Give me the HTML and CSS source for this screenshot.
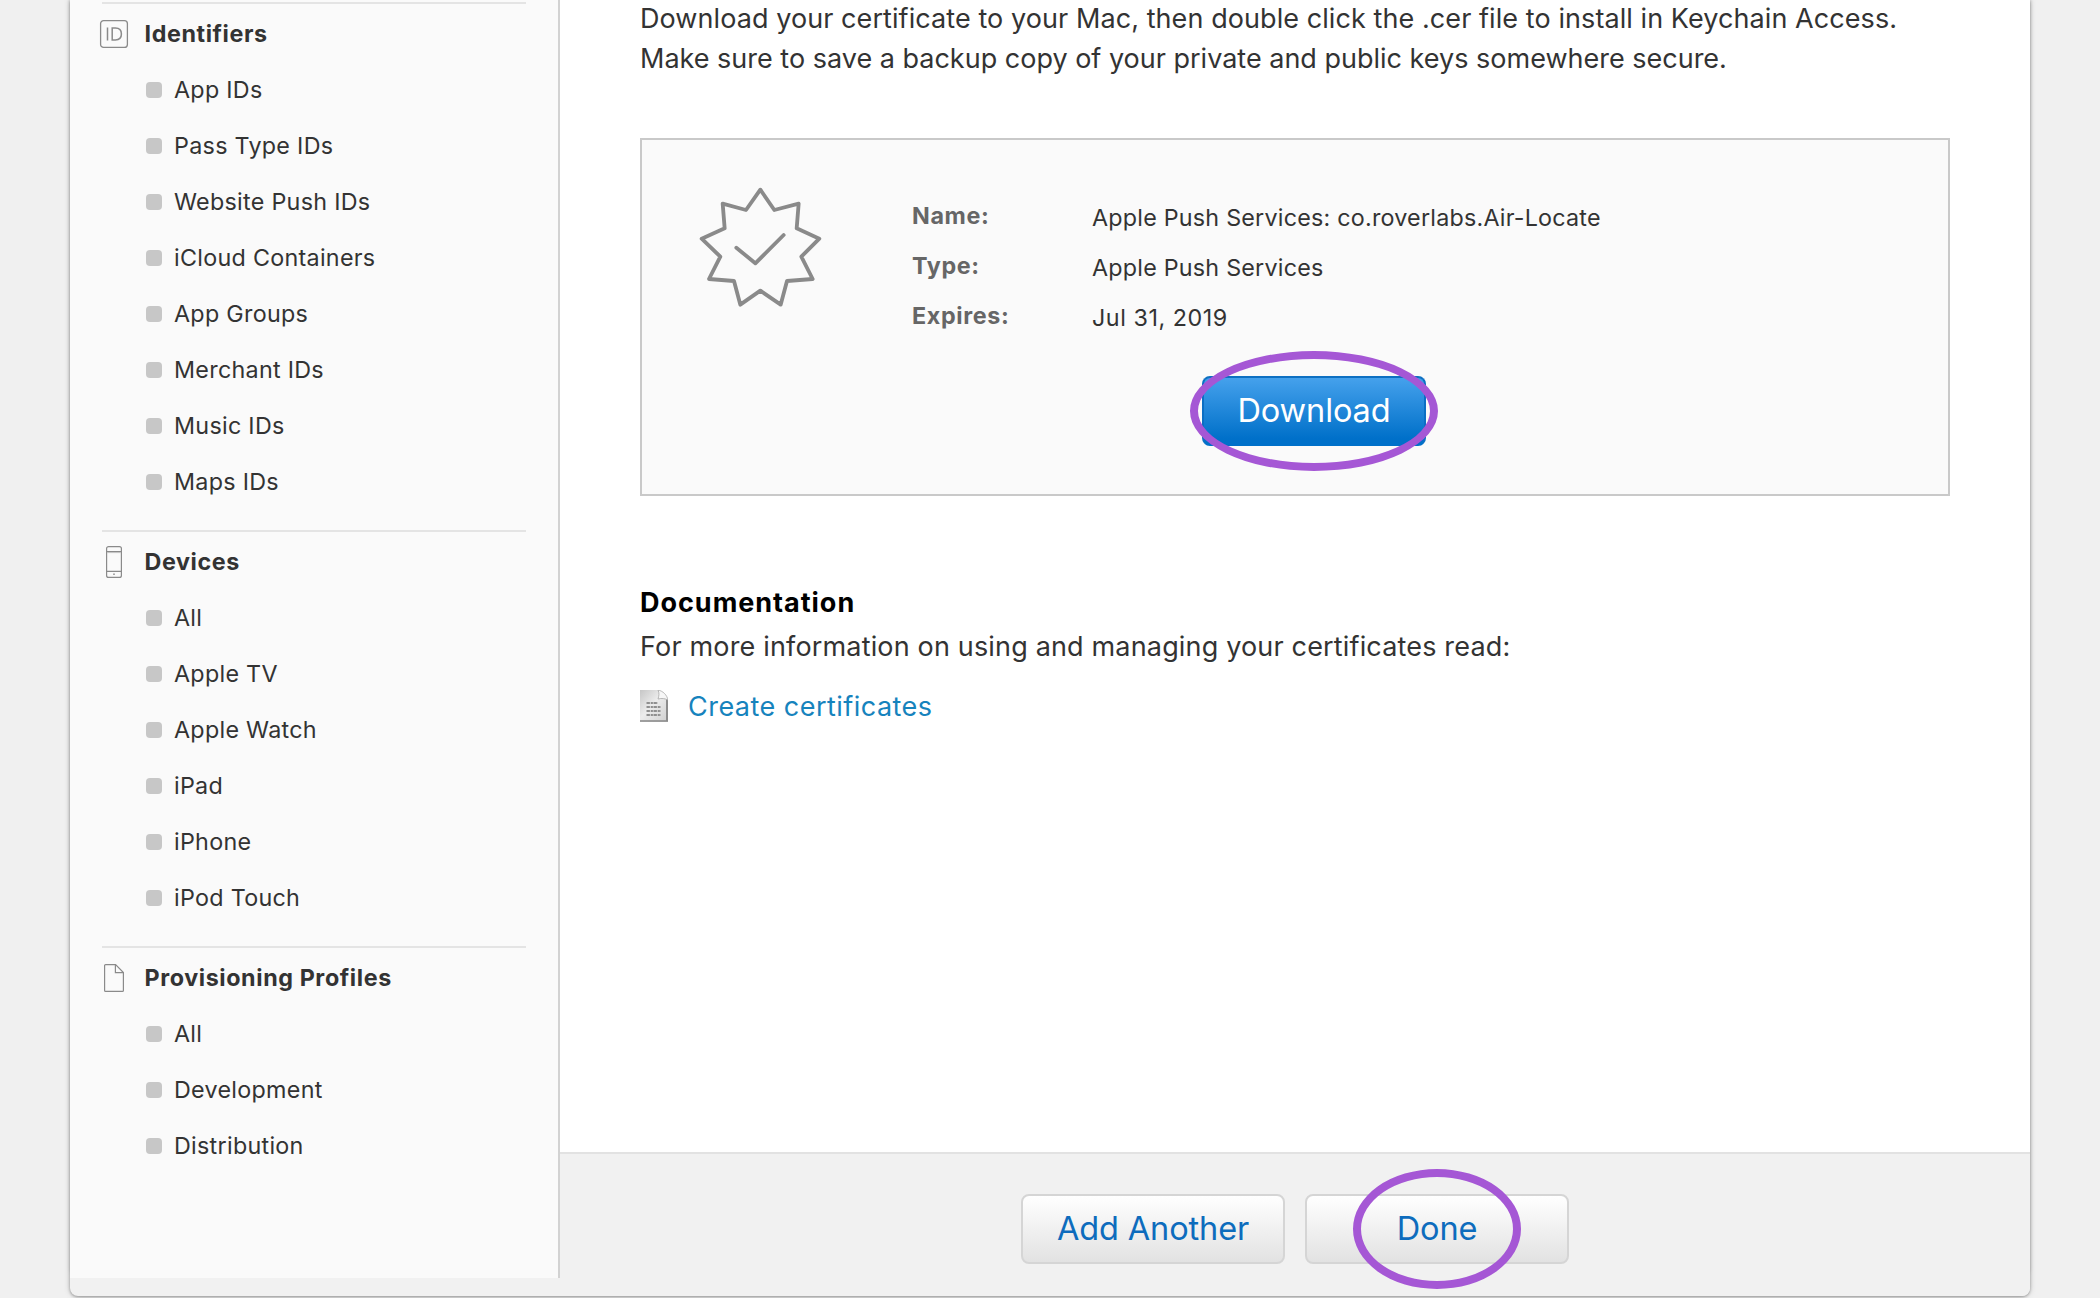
FILE: index.html
```html
<!DOCTYPE html>
<html lang="en">
<head>
<meta charset="utf-8">
<title>Certificates</title>
<link rel="stylesheet" href="styles.css">
</head>
<body>
<div class="panel">
  <nav class="sidebar">
    <section class="group">
      <h3 class="group-title">
        <svg class="group-icon" viewBox="0 0 32 32" fill="none" stroke="#8a8a8a"><rect x="2.6" y="2.6" width="26.8" height="26.8" rx="3" stroke-width="1.3"/><path d="M9.5 9.5v13M14.2 10.1v11.8h3.2c3.7 0 6-2.2 6-5.9s-2.3-5.9-6-5.9z" stroke-width="1.5"/></svg>
        Identifiers
      </h3>
      <ul class="links">
        <li>App IDs</li>
        <li>Pass Type IDs</li>
        <li>Website Push IDs</li>
        <li>iCloud Containers</li>
        <li>App Groups</li>
        <li>Merchant IDs</li>
        <li>Music IDs</li>
        <li>Maps IDs</li>
      </ul>
    </section>
    <section class="group">
      <h3 class="group-title">
        <svg class="group-icon" viewBox="0 0 32 32" fill="none" stroke="#8a8a8a" stroke-width="1.2"><rect x="8.6" y="0.6" width="14.8" height="30.8" rx="2"/><path d="M9 5.6h14M9 25.4h14"/><path d="M9 6.6h14" stroke="#c4c4c4" stroke-width="1"/><rect x="15.2" y="27.5" width="1.6" height="1.4" fill="#8a8a8a" stroke="none"/></svg>
        Devices
      </h3>
      <ul class="links">
        <li>All</li>
        <li>Apple TV</li>
        <li>Apple Watch</li>
        <li>iPad</li>
        <li>iPhone</li>
        <li>iPod Touch</li>
      </ul>
    </section>
    <section class="group">
      <h3 class="group-title">
        <svg class="group-icon" viewBox="0 0 32 32" fill="none" stroke="#8a8a8a" stroke-width="1.2"><path d="M7.6 2.6h10l7.8 8v17.8a1 1 0 0 1-1 1H7.6a1 1 0 0 1-1-1V3.6a1 1 0 0 1 1-1z"/><path d="M17.4 2.8v7.8h7.8"/></svg>
        Provisioning Profiles
      </h3>
      <ul class="links">
        <li>All</li>
        <li>Development</li>
        <li>Distribution</li>
      </ul>
    </section>
  </nav>

  <main class="main">
    <div class="content">
      <p class="intro">Download your certificate to your Mac, then double click the .cer file to install in Keychain Access.</p>
      <p class="intro intro-last">Make sure to save a backup copy of your private and public keys somewhere secure.</p>

      <section class="card">
        <svg class="badge" viewBox="0 0 420 420" fill="none" stroke="#8a8a8a" stroke-width="11.5" stroke-linejoin="round" stroke-linecap="round"><path d="M211 41L253 102L326 83L320 157L388 188L334 242L368 309L291 315L272 386L211 344L151 386L132 315L57 309L91 242L35 188L104 157L98 83L168 102z"/><path d="M139 215L196 262L281 177"/></svg>
        <div class="details">
          <dl class="fields">
            <dt>Name:</dt><dd>Apple Push Services: co.roverlabs.Air-Locate</dd>
            <dt>Type:</dt><dd>Apple Push Services</dd>
            <dt>Expires:</dt><dd class="date">Jul 31, 2019</dd>
          </dl>
          <button class="button button-primary">Download<span class="mark mark-download"></span></button>
        </div>
      </section>

      <h2 class="doc-title">Documentation</h2>
      <p class="doc-text">For more information on using and managing your certificates read:</p>
      <a class="doc-link">
        <svg class="doc-icon" viewBox="0 0 28 32">
          <defs><linearGradient id="paper" x1="0" y1="0" x2="1" y2="1"><stop offset="0" stop-color="#c6c6c6"/><stop offset=".45" stop-color="#ececec"/><stop offset="1" stop-color="#cfcfcf"/></linearGradient></defs>
          <path d="M0 0H18L28 10V32H0z" fill="url(#paper)"/>
          <path d="M27 9V31" stroke="#8c8c8c" stroke-width="2"/>
          <path d="M0 31H28" stroke="#8c8c8c" stroke-width="1.6"/>
          <path d="M18 0C19.5 3 19 6 18 9C22 8 25 8.5 28 10C27 5 23 1 18 0z" fill="#f7f7f7" stroke="#a8a8a8" stroke-width=".8"/>
          <path d="M6.5 13H18M6.5 17H21M6.5 21H21M6.5 25H21" stroke="#8f8f8f" stroke-width="2" stroke-dasharray="3.4 .8 2.2 .6"/>
        </svg>
        Create certificates
      </a>
    </div>

    <footer class="footer">
      <button class="button">Add Another</button>
      <button class="button">Done<span class="mark mark-done"></span></button>
    </footer>
  </main>
</div>
</body>
</html>
```
FILE: styles.css
```css
* {
  box-sizing: border-box;
  margin: 0;
  padding: 0;
}

body {
  background: #f0f0f0;
  color: #333;
  font-family: Inter, "Liberation Sans", sans-serif;
  height: 1298px;
  overflow: hidden;
}

.panel {
  display: flex;
  align-items: flex-start;
  width: 1960px;
  height: 1296px;
  margin: 0 auto;
  background: #f1f1f1;
  border-radius: 0 0 8px 8px;
  box-shadow: 0 1px 3px rgba(0, 0, 0, .32), 0 0 6px rgba(0, 0, 0, .18), 0 -20px 4px rgba(0, 0, 0, .1);
}

.sidebar {
  width: 490px;
  height: 1278px;
  padding: 2px 32px 0;
  background: #fafafa;
  border-right: 2px solid #d2d2d2;
}

.group {
  padding: 2px 0 20px;
  border-top: 2px solid #e4e4e4;
}

.group-title {
  display: flex;
  align-items: center;
  gap: 14.5px;
  height: 56px;
  margin-left: -4px;
  padding-bottom: 2px;
  font-size: 23.3px;
  font-weight: 700;
  letter-spacing: .6px;
}

.group-icon {
  width: 32px;
  height: 32px;
  margin-top: 2px;
}

.links {
  list-style: none;
}

.links li {
  display: flex;
  align-items: center;
  gap: 12px;
  height: 56px;
  padding: 0 0 2px 44px;
  font-size: 23.3px;
  letter-spacing: .29px;
}

.links li::before {
  content: "";
  width: 16px;
  height: 16px;
  margin-top: 2px;
  border-radius: 4px;
  background: #c7c7c7;
}

.main {
  display: flex;
  flex-direction: column;
  width: 1470px;
  height: 1296px;
}

.content {
  flex: 1;
  padding: 0 80px;
  background: #fff;
}

.intro {
  height: 40px;
  font-size: 27px;
  line-height: 40px;
  letter-spacing: .075px;
  white-space: nowrap;
}

.intro:first-child {
  margin-top: -1px;
}

.intro-last {
  letter-spacing: 0;
}

.card {
  display: flex;
  height: 358px;
  margin-top: 59px;
  border: 2px solid #c9c9c9;
  background: #fafafa;
}

.badge {
  flex: none;
  width: 140px;
  height: 140px;
  margin: 36px 82px 0 48px;
}

.details {
  padding-top: 51px;
}

.fields {
  display: grid;
  grid-template-columns: 180px auto;
  font-size: 23.3px;
  line-height: 50px;
}

.fields dt {
  color: #666;
  font-weight: 700;
  letter-spacing: .65px;
}

.fields dd {
  padding-top: 2px;
  height: 50px;
  letter-spacing: .225px;
}

.fields .date {
  letter-spacing: .55px;
}

.button {
  position: relative;
  width: 264px;
  height: 70px;
  padding-bottom: 2px;
  border: 2px solid #d5d5d5;
  border-radius: 8px;
  background: linear-gradient(#fff, #e2e2e2);
  color: #0d6cbd;
  font: 400 32.5px Inter, "Liberation Sans", sans-serif;
  letter-spacing: -.12px;
}

.button-primary {
  width: 224px;
  margin: 35px 0 0 290px;
  border-color: #0d70c2 #0a6fc4 #0070c9;
  background: linear-gradient(#45a1ec, #0070c9 92%);
  color: #fff;
}

/* Callout rings over the buttons */
.mark {
  position: absolute;
  top: 50%;
  left: 50%;
  height: 120px;
  transform: translate(-50%, -50%);
  border: 8px solid #a557d5;
  border-radius: 50%;
}

.mark-download {
  width: 248px;
}

.mark-done {
  width: 168px;
}

.doc-title {
  margin-top: 87px;
  color: #000;
  font-size: 27px;
  line-height: 40px;
  letter-spacing: .97px;
}

.doc-text {
  margin-top: 4px;
  font-size: 27px;
  line-height: 40px;
  letter-spacing: .165px;
}

.doc-link {
  display: flex;
  align-items: center;
  gap: 20px;
  height: 40px;
  margin-top: 19px;
  color: #1683bd;
  font-size: 27px;
  letter-spacing: .47px;
}

.doc-icon {
  width: 28px;
  height: 32px;
}

.footer {
  display: flex;
  justify-content: center;
  align-items: flex-start;
  gap: 20px;
  height: 144px;
  padding-top: 40px;
  border-top: 2px solid #e2e2e2;
  border-radius: 0 0 8px 0;
  background: #f1f1f1;
}
```
